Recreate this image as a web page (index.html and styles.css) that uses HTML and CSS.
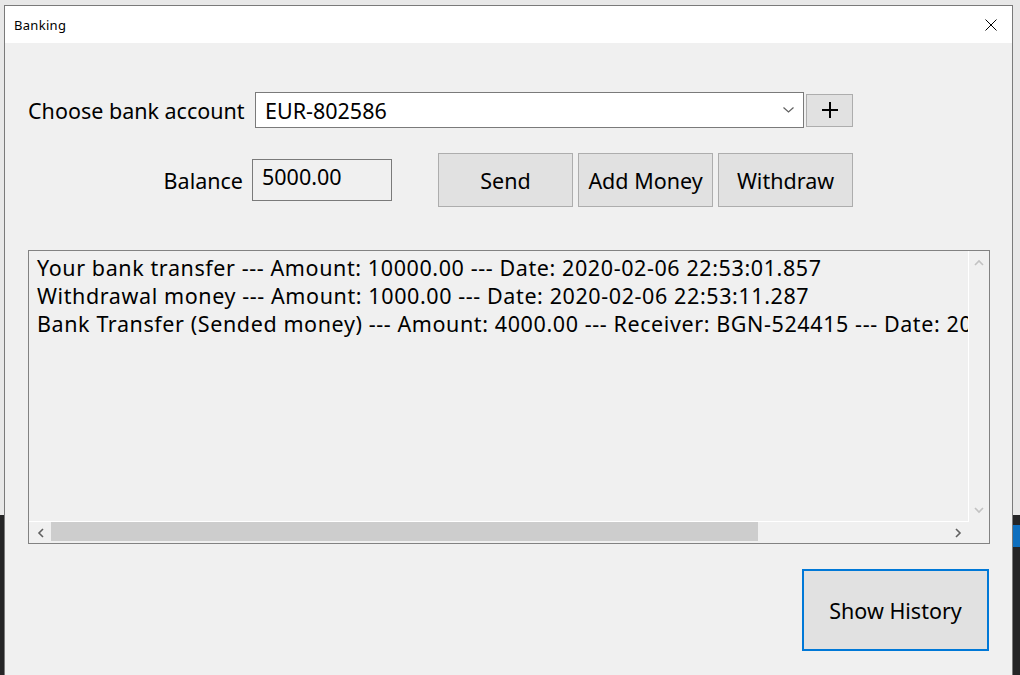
FILE: index.html
```html
<!DOCTYPE html>
<html lang="en">
<head>
<meta charset="utf-8">
<title>Banking</title>
<link rel="stylesheet" href="styles.css">
</head>
<body>
<div class="desktop">
  <div class="window">
    <div class="titlebar">
      <span class="title">Banking</span>
      <svg class="close" width="12" height="12" viewBox="0 0 12 12"><path d="M0.5 0.5 L11.5 11.5 M11.5 0.5 L0.5 11.5" stroke="#000" stroke-width="1" fill="none"/></svg>
    </div>
    <div class="client">
      <div class="row account-row">
        <div class="lbl account-lbl">Choose bank account</div>
        <div class="combo">
          <span class="combo-text">EUR-802586</span>
          <svg class="chev" width="11" height="6" viewBox="0 0 11 6"><path d="M0.5 0.5 L5.5 5 L10.5 0.5" stroke="#606060" stroke-width="1.2" fill="none"/></svg>
        </div>
        <button class="btn plus" type="button"><svg width="16" height="16" viewBox="0 0 16 16"><path d="M0 8 H16 M8 0 V16" stroke="#000" stroke-width="2" fill="none"/></svg></button>
      </div>
      <div class="row balance-row">
        <div class="lbl balance-lbl">Balance</div>
        <div class="textbox">5000.00</div>
        <div class="actions">
          <button class="btn action" type="button">Send</button>
          <button class="btn action" type="button">Add Money</button>
          <button class="btn action" type="button">Withdraw</button>
        </div>
      </div>
      <div class="listbox">
        <div class="items">
          <div class="item">Your bank transfer --- Amount: 10000.00 --- Date: 2020-02-06 22:53:01.857</div>
          <div class="item">Withdrawal money --- Amount: 1000.00 --- Date: 2020-02-06 22:53:11.287</div>
          <div class="item">Bank Transfer (Sended money) --- Amount: 4000.00 --- Receiver: BGN-524415 --- Date: 2020-02-06 22:53:24.112</div>
        </div>
        <div class="vscroll">
          <svg width="10" height="7" viewBox="0 0 10 7"><path d="M1 6 L5 2 L9 6" stroke="#c2c2c2" stroke-width="1.6" fill="none"/></svg>
          <svg width="10" height="7" viewBox="0 0 10 7"><path d="M1 1 L5 5 L9 1" stroke="#c2c2c2" stroke-width="1.6" fill="none"/></svg>
        </div>
        <div class="hscroll">
          <div class="harrow"><svg width="7" height="10" viewBox="0 0 7 10"><path d="M6 1 L2 5 L6 9" stroke="#606060" stroke-width="1.6" fill="none"/></svg></div>
          <div class="track"><div class="thumb"></div></div>
          <div class="harrow"><svg width="7" height="10" viewBox="0 0 7 10"><path d="M1 1 L5 5 L1 9" stroke="#606060" stroke-width="1.6" fill="none"/></svg></div>
        </div>
        <div class="corner"></div>
      </div>
      <div class="footer">
        <button class="btn history" type="button">Show History</button>
      </div>
    </div>
  </div>
</div>
</body>
</html>
```

FILE: styles.css
```css
html, body {
  margin: 0;
  padding: 0;
}

body {
  width: 1020px;
  height: 675px;
  overflow: hidden;
  font-family: "Noto Sans", "Open Sans", sans-serif;
}

.desktop {
  width: 1020px;
  height: 675px;
  box-sizing: border-box;
  padding: 5px 0 0 4px;
  background:
    linear-gradient(#0e6fbf, #0e6fbf) no-repeat right 0 top 525px / 7px 22px,
    linear-gradient(to bottom, #e8e8e8 0, #e8e8e8 515px, #252526 515px);
}

.window {
  width: 1009px;
  height: 680px;
  box-sizing: border-box;
  border: 1px solid #7a7a7a;
  border-bottom: none;
  background: #f0f0f0;
}

.titlebar {
  height: 37px;
  background: #fff;
  display: flex;
  align-items: center;
  justify-content: space-between;
  padding: 0 15px 0 9px;
}

.title {
  font-size: 13px;
  letter-spacing: 0.3px;
  color: #000;
}

.close {
  display: block;
}

.client {
  padding: 0 0 0 23px;
}

.row {
  display: flex;
  align-items: center;
}

.lbl {
  font-size: 21.5px;
  color: #000;
  white-space: nowrap;
}

.account-row {
  margin-top: 49px;
}

.account-lbl {
  width: 227px;
}

.combo {
  width: 549px;
  height: 36px;
  box-sizing: border-box;
  border: 1px solid #7a7a7a;
  background: #fff;
  display: flex;
  align-items: center;
  justify-content: space-between;
  padding: 0 9px 0 9px;
  font-size: 21.5px;
}

.btn {
  font-family: inherit;
  font-size: 21.5px;
  color: #000;
  background: #e1e1e1;
  border: 1px solid #adadad;
  padding: 0;
  margin: 0;
  display: flex;
  align-items: center;
  justify-content: center;
}

.plus {
  width: 47px;
  height: 33px;
  margin-left: 2px;
}

.balance-row {
  margin-top: 25px;
}

.balance-lbl {
  width: 224px;
  text-align: right;
  padding-right: 9px;
  box-sizing: border-box;
}

.textbox {
  width: 140px;
  height: 42px;
  box-sizing: border-box;
  border: 1px solid #7a7a7a;
  background: #f0f0f0;
  font-size: 21.5px;
  padding: 2px 0 0 9px;
  line-height: 30px;
}

.actions {
  display: flex;
  gap: 5px;
  margin-left: 46px;
}

.action {
  width: 135px;
  height: 54px;
}

.listbox {
  margin-top: 43px;
  width: 962px;
  height: 294px;
  box-sizing: border-box;
  border: 1px solid #828282;
  display: grid;
  grid-template-columns: 940px 20px;
  grid-template-rows: 271px 21px;
  background: #f0f0f0;
}

.items {
  box-sizing: border-box;
  border-right: 1px solid #fff;
  border-bottom: 1px solid #fff;
  overflow: hidden;
  padding: 3px 0 0 8px;
  font-size: 21.5px;
  letter-spacing: 0.6px;
  line-height: 28px;
  white-space: nowrap;
}

.vscroll {
  display: flex;
  flex-direction: column;
  justify-content: space-between;
  align-items: center;
  padding: 8px 0 8px 0;
}

.vscroll svg {
  display: block;
}

.hscroll {
  display: flex;
  height: 21px;
}

.harrow {
  width: 22px;
  display: flex;
  align-items: center;
  justify-content: center;
}

.harrow svg {
  display: block;
}

.track {
  flex: 1;
  display: flex;
  align-items: flex-start;
}

.thumb {
  width: 707px;
  height: 19px;
  background: #cdcdcd;
}

.footer {
  margin-top: 25px;
  padding-left: 774px;
}

.history {
  width: 187px;
  height: 82px;
  border: 2px solid #0078d7;
}
```
